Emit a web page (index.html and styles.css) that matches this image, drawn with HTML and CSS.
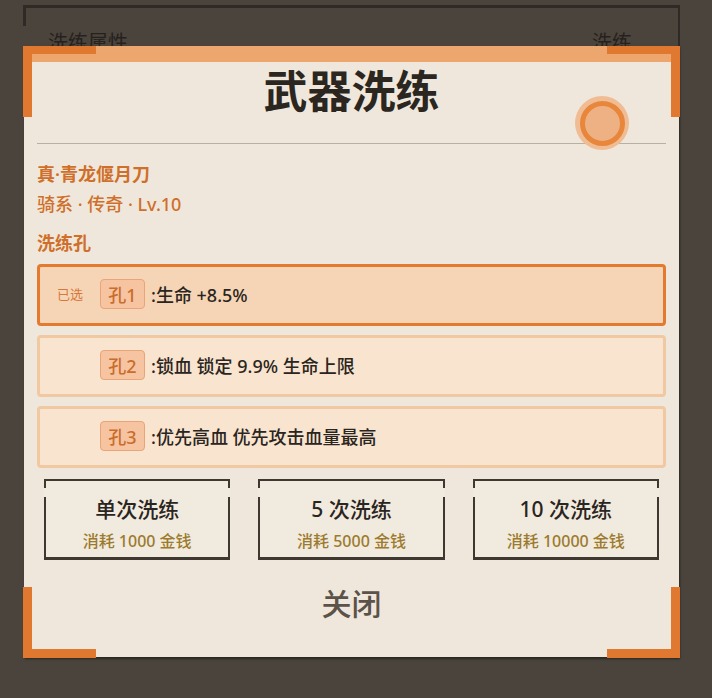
FILE: index.html
```html
<!DOCTYPE html>
<html lang="zh-CN">
<head>
    <meta charset="UTF-8">
    <meta name="viewport" content="width=device-width, initial-scale=1.0">
    <title>武器洗练</title>
    <link rel="stylesheet" href="styles.css">
</head>
<body>
    <div class="page">
        <div class="page-head">
            <span>洗练属性</span>
            <span>洗练</span>
        </div>
    </div>

    <div class="modal">
        <span class="corner tl"></span>
        <span class="corner tr"></span>
        <span class="corner bl"></span>
        <span class="corner br"></span>

        <div class="modal-body">
            <div class="modal-head">
                <h1>武器洗练</h1>
                <span class="seal"></span>
            </div>

            <div class="weapon-name">真·青龙偃月刀</div>
            <div class="weapon-meta">骑系 · 传奇 · Lv.10</div>
            <div class="section-title">洗练孔</div>

            <div class="slots">
                <div class="slot selected">
                    <span class="slot-tag">已选</span>
                    <span class="slot-badge">孔1</span>
                    <span class="slot-text">:生命 +8.5%</span>
                </div>
                <div class="slot">
                    <span class="slot-tag"></span>
                    <span class="slot-badge">孔2</span>
                    <span class="slot-text">:锁血 锁定 9.9% 生命上限</span>
                </div>
                <div class="slot">
                    <span class="slot-tag"></span>
                    <span class="slot-badge">孔3</span>
                    <span class="slot-text">:优先高血 优先攻击血量最高</span>
                </div>
            </div>

            <div class="actions">
                <div class="action">
                    <div class="action-title">单次洗练</div>
                    <div class="action-cost">消耗 1000 金钱</div>
                </div>
                <div class="action">
                    <div class="action-title">5 次洗练</div>
                    <div class="action-cost">消耗 5000 金钱</div>
                </div>
                <div class="action">
                    <div class="action-title">10 次洗练</div>
                    <div class="action-cost">消耗 10000 金钱</div>
                </div>
            </div>

            <div class="close">关闭</div>
        </div>
    </div>
</body>
</html>
```

FILE: styles.css
```css
body {
    margin: 0;
    width: 712px;
    height: 698px;
    background-color: #4a443d;
    font-family: "Noto Sans", "Noto Sans CJK SC", sans-serif;
    overflow: hidden;
    position: relative;
}

/* page underneath the dialog */
.page {
    margin: 5px 32px 0 23px;
    height: 60px;
    border-top: 3px solid #2f2a25;
    border-right: 2px solid #2f2a25;
    position: relative;
}
.page::before {
    content: "";
    position: absolute;
    left: 0;
    top: 0;
    width: 3px;
    height: 18px;
    background: #2f2a25;
}
.page-head {
    display: flex;
    justify-content: space-between;
    padding: 22px 46px 0 25px;
    font-size: 20px;
    line-height: 26px;
    color: #26211c;
}

/* dialog */
.modal {
    position: absolute;
    left: 24px;
    top: 46px;
    width: 655px;
    height: 611px;
    background: #efe7db;
    border-top: 16px solid #eda66d;
    box-sizing: border-box;
    box-shadow: 1px 2px 2px rgba(20, 16, 12, 0.6);
}
.corner {
    position: absolute;
    width: 73px;
    height: 71px;
    box-sizing: border-box;
    border: 0 solid #e07830;
}
.corner.tl { left: -1px; top: -16px; border-top-width: 8px; border-left-width: 9px; }
.corner.tr { right: -1px; top: -16px; border-top-width: 8px; border-right-width: 9px; }
.corner.bl { left: -1px; bottom: -1px; border-bottom-width: 9px; border-left-width: 9px; }
.corner.br { right: -1px; bottom: -1px; border-bottom-width: 9px; border-right-width: 9px; }

.modal-body {
    padding: 0 13px;
}
.modal-head {
    position: relative;
    padding-top: 3px;
    height: 78px;
    border-bottom: 1px solid #b9b0a5;
}
.modal-head h1 {
    margin: 0;
    text-align: center;
    font-size: 44px;
    line-height: 52px;
    font-weight: 700;
    color: #2b2620;
}
.seal {
    position: absolute;
    left: 538px;
    top: 34px;
    width: 54px;
    height: 54px;
    border-radius: 50%;
    background: #f0bc94;
    display: flex;
    align-items: center;
    justify-content: center;
}
.seal::after {
    content: "";
    width: 35px;
    height: 35px;
    border-radius: 50%;
    border: 5px solid #e8873b;
    background: #edb183;
}

.weapon-name,
.weapon-meta,
.section-title {
    font-size: 18px;
    line-height: 24px;
    font-weight: 600;
    color: #cf6f2a;
}
.weapon-name {
    margin-top: 18px;
}
.weapon-meta {
    margin-top: 6px;
    font-weight: 500;
}
.section-title {
    margin-top: 15px;
}

.slots {
    margin-top: 9px;
    display: flex;
    flex-direction: column;
    gap: 9px;
}
.slot {
    height: 62px;
    box-sizing: border-box;
    display: flex;
    align-items: center;
    background: #f8e4cf;
    border: 3px solid #f0c8a2;
    border-radius: 4px;
    padding-bottom: 3px;
}
.slot.selected {
    background: #f6d5b6;
    border-color: #e37a2f;
}
.slot-tag {
    width: 43px;
    padding-left: 17px;
    font-size: 13px;
    color: #d5793a;
}
.slot-badge {
    width: 45px;
    height: 30px;
    box-sizing: border-box;
    display: flex;
    align-items: center;
    justify-content: center;
    background: #f6c4a0;
    border: 1px solid #e9a578;
    border-radius: 4px;
    font-size: 18px;
    font-weight: 500;
    color: #c96d2c;
}
.slot-text {
    margin-left: 6px;
    font-size: 18px;
    font-weight: 500;
    color: #2a2520;
}

.actions {
    margin-top: 11px;
    padding: 0 7px;
    display: flex;
    gap: 28px;
}
.action {
    position: relative;
    flex: 1;
    height: 81px;
    box-sizing: border-box;
    border: 2px solid #3f3830;
    border-bottom-width: 3px;
    padding-top: 15px;
    text-align: center;
    background: #f1eadf;
}
/* breaks in the sketched side strokes */
.action::before,
.action::after {
    content: "";
    position: absolute;
    top: 7px;
    width: 2px;
    height: 9px;
    background: #f1eadf;
}
.action::before { left: -2px; }
.action::after { right: -2px; }
.action-title {
    font-size: 21px;
    line-height: 26px;
    font-weight: 500;
    color: #2a2520;
}
.action-cost {
    margin-top: 9px;
    font-size: 16px;
    line-height: 20px;
    font-weight: 500;
    color: #9c7b2e;
}

.close {
    margin-top: 26px;
    text-align: center;
    font-size: 30px;
    line-height: 36px;
    font-weight: 500;
    color: #5b5249;
}
```
